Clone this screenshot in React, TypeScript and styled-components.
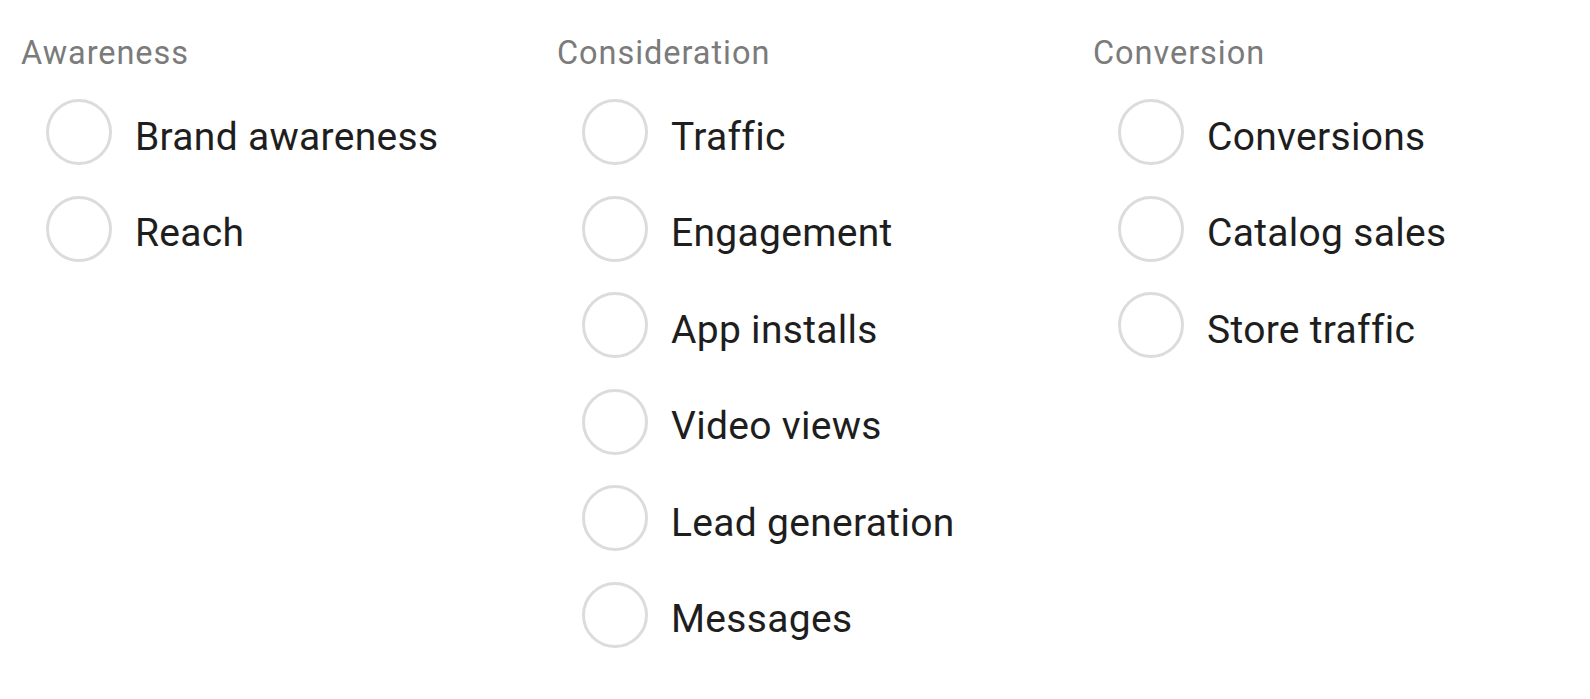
import React from "react";
import styled, { createGlobalStyle } from "styled-components";

const GlobalStyle = createGlobalStyle`
  html, body {
    margin: 0;
    padding: 0;
    background: #ffffff;
  }
  body {
    font-family: Roboto, "Noto Sans", Arial, sans-serif;
    -webkit-font-smoothing: antialiased;
  }
`;

const Page = styled.div`
  display: grid;
  grid-template-columns: repeat(3, 536px);
  padding: 35px 0 0 21px;
`;

const Column = styled.section`
  display: flex;
  flex-direction: column;
`;

const Heading = styled.div`
  font-size: 32.5px;
  line-height: 37px;
  letter-spacing: 0.95px;
  color: #7b7b7b;
  margin-bottom: 27px;
`;

const List = styled.div`
  display: flex;
  flex-direction: column;
  gap: 30.5px;
  padding-left: 25px;
`;

const Option = styled.label`
  display: flex;
  align-items: center;
  gap: 23px;
  cursor: pointer;
`;

const Radio = styled.span`
  box-sizing: border-box;
  width: 66px;
  height: 66px;
  border-radius: 50%;
  border: 3px solid #dcdcdc;
  flex: none;
`;

const Label = styled.span`
  font-size: 39px;
  line-height: 46px;
  letter-spacing: 0.3px;
  color: #1e1e1e;
  padding-top: 9px;
`;

const groups = [
  { title: "Awareness", items: ["Brand awareness", "Reach"] },
  {
    title: "Consideration",
    items: [
      "Traffic",
      "Engagement",
      "App installs",
      "Video views",
      "Lead generation",
      "Messages",
    ],
  },
  { title: "Conversion", items: ["Conversions", "Catalog sales", "Store traffic"] },
];

export default function App() {
  return (
    <>
      <GlobalStyle />
      <Page>
        {groups.map((g) => (
          <Column key={g.title}>
            <Heading>{g.title}</Heading>
            <List>
              {g.items.map((item) => (
                <Option key={item}>
                  <Radio />
                  <Label>{item}</Label>
                </Option>
              ))}
            </List>
          </Column>
        ))}
      </Page>
    </>
  );
}
